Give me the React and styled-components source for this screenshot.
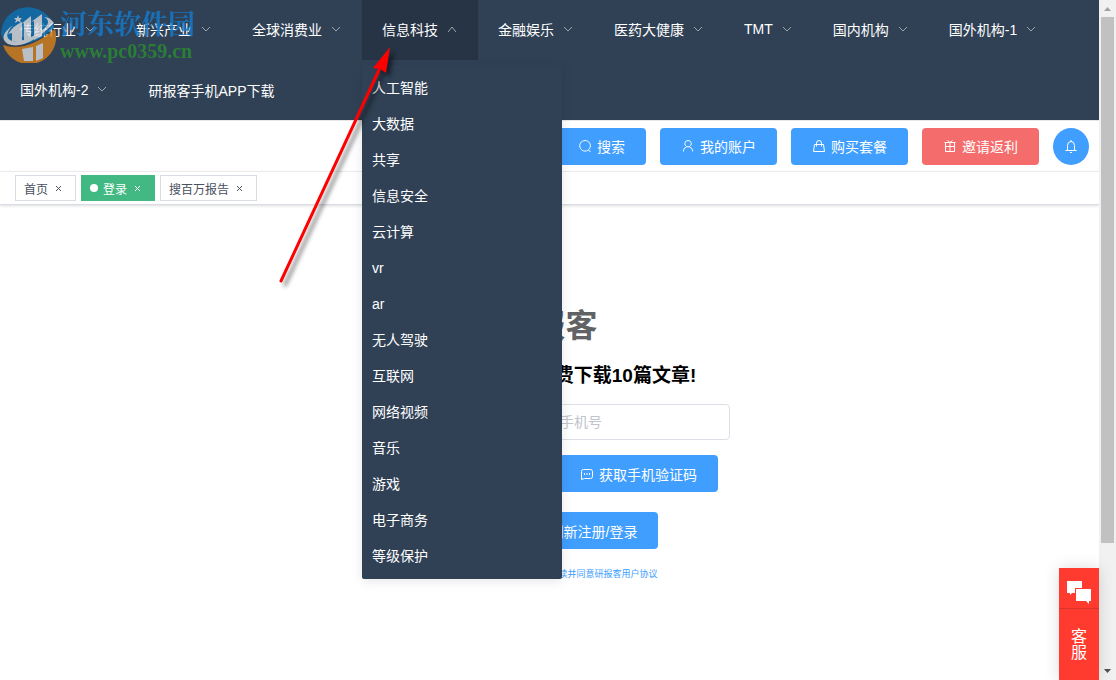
import React from 'react';
import styled, {createGlobalStyle, css} from 'styled-components';

const GlobalStyle = createGlobalStyle`
  * {
    box-sizing: border-box;
  }

  body {
    margin: 0;
    overflow: hidden;
    background: #fff;
    color: #000;
    font-family: "Liberation Sans", "Noto Sans CJK SC", sans-serif;
    font-size: 14px;
  }

  button, input {
    font: inherit;
  }
`;

const Window = styled.div`
  position: relative;
  display: flex;
  height: 100vh;
  overflow: hidden;
`;

const Page = styled.div`
  flex: 1;
  min-width: 0;
`;

const Nav = styled.ul`
  display: flex;
  flex-wrap: wrap;
  margin: 0;
  padding: 0;
  list-style: none;
  background: #304156;
  border-bottom: 1px solid #e6e6e6;
`;

const NavItem = styled.li`
  position: relative;
`;

const NavLink = styled.a`
  display: flex;
  align-items: center;
  gap: 8px;
  height: 60px;
  padding: 0 20px ${props => props.$plain ? 0 : 2}px;
  color: #fff;
  text-decoration: none;
  background: ${props => props.$open ? '#263445' : 'transparent'};
`;

const Menu = styled.ul`
  position: absolute;
  z-index: 10;
  top: 65px;
  left: 0;
  width: 200px;
  margin: 0;
  padding: 5px 0;
  list-style: none;
  background: #304156;
  border-radius: 2px;
  box-shadow: 0 2px 12px 0 rgba(0, 0, 0, .1);
`;

const MenuLink = styled.a`
  display: block;
  padding: 0 10px;
  line-height: 36px;
  color: #fff;
  text-decoration: none;
`;

const Toolbar = styled.div`
  display: flex;
  justify-content: flex-end;
  align-items: center;
  gap: 14px;
  height: 51px;
  padding: 0 10px;
  border-bottom: 1px solid #f3f3f3;
`;

const Button = styled.button`
  display: flex;
  align-items: center;
  justify-content: center;
  gap: 5px;
  height: 37px;
  padding: 0 21px;
  border: 0;
  border-radius: 4px;
  color: #fff;
  background: ${props => props.$danger ? '#f56c6c' : '#409eff'};
  white-space: nowrap;

  ${props => props.$round && css`
    width: 36px;
    padding: 0;
    border-radius: 50%;
  `}
`;

const Tags = styled.div`
  display: flex;
  align-items: center;
  gap: 5px;
  height: 33px;
  padding: 0 15px;
  border-bottom: 1px solid #d8dce5;
  box-shadow: 0 1px 3px 0 rgba(0, 0, 0, .12), 0 0 3px 0 rgba(0, 0, 0, .04);
`;

const Tag = styled.a`
  display: flex;
  align-items: center;
  height: 26px;
  padding: 0 8px;
  border: 1px solid ${props => props.$active ? '#42b983' : '#d8dce5'};
  color: ${props => props.$active ? '#fff' : '#495060'};
  background: ${props => props.$active ? '#42b983' : '#fff'};
  font-size: 12px;
  text-decoration: none;
`;

const Dot = styled.span`
  width: 8px;
  height: 8px;
  margin-right: 5px;
  border-radius: 50%;
  background: #fff;
`;

const CloseIcon = styled.svg`
  width: 16px;
  height: 16px;
  margin-left: 3px;
`;

const Login = styled.form`
  display: flex;
  flex-direction: column;
  align-items: center;
  padding-top: 97px;
`;

const Title = styled.h1`
  margin: 0;
  color: #606266;
  font-size: 32px;
  line-height: 48px;
`;

const SubTitle = styled.h3`
  margin: 16px 0 18px;
  font-size: 19px;
  line-height: 20px;
`;

const Row = styled.div`
  display: flex;
  align-items: center;
  gap: ${props => props.$gap || 14}px;
  margin-bottom: ${props => props.$space || 0}px;
`;

const Label = styled.label`
  width: 119px;
  text-align: right;
  color: #606266;
`;

const Input = styled.input`
  width: ${props => props.$short ? 164 : 228}px;
  height: 36px;
  padding: 0 15px;
  border: 1px solid #dcdfe6;
  border-radius: 4px;
  color: #606266;

  &::placeholder {
    color: #c0c4cc;
  }
`;

const Agreement = styled.a`
  margin-top: 17px;
  color: #409eff;
  font-size: 9px;
  line-height: 16px;
  text-decoration: none;
`;

const Service = styled.button`
  position: absolute;
  right: 17px;
  bottom: 0;
  display: flex;
  flex-direction: column;
  align-items: center;
  width: 40px;
  height: 112px;
  padding: 0;
  border: 0;
  color: #fff;
  background: #ff3b30;
  box-shadow: 0 0 16px rgba(0, 0, 0, .14);
`;

const ServiceIcon = styled.span`
  display: flex;
  align-items: center;
  justify-content: center;
  width: 40px;
  height: 41px;
  padding-top: 8px;
  border-bottom: 1px solid #d9342b;
`;

const ServiceText = styled.span`
  width: 16px;
  margin-top: 20px;
  font-size: 16px;
  line-height: 16px;
`;

const ScrollBar = styled.div`
  display: flex;
  flex-direction: column;
  align-items: center;
  width: 17px;
  background: #f1f1f1;
`;

const ScrollArrow = styled.svg`
  flex: none;
  width: 17px;
  height: 17px;
`;

const ScrollTrack = styled.div`
  flex: 1;
  width: 13px;
`;

const ScrollThumb = styled.div`
  height: 81.5%;
  background: #c1c1c1;
`;

const Watermark = styled.div`
  position: absolute;
  z-index: 20;
  top: 5px;
  left: 0;
  display: flex;
  gap: 4px;
  opacity: .8;
  pointer-events: none;
`;

const SiteName = styled.div`
  color: #147ccf;
  font-family: "Noto Serif CJK SC", "Noto Sans CJK SC", sans-serif;
  font-size: 27px;
  font-weight: bold;
  line-height: 36px;
`;

const SiteUrl = styled.div`
  color: #2a8e2e;
  font-family: "Liberation Serif", serif;
  font-size: 20px;
  font-weight: bold;
  line-height: 20px;
`;

const Pointer = styled.svg`
  position: absolute;
  z-index: 30;
  top: 40px;
  left: 270px;
  pointer-events: none;
`;

const PointerShape = styled.g`
  filter: drop-shadow(4px 4px 2px rgba(0, 0, 0, .5));
`;

const menus = [
   {text: '传统行业'},
   {text: '新兴产业'},
   {text: '全球消费业'},
   {
      text: '信息科技',
      items: ['人工智能', '大数据', '共享', '信息安全', '云计算', 'vr', 'ar', '无人驾驶', '互联网',
         '网络视频', '音乐', '游戏', '电子商务', '等级保护']
   },
   {text: '金融娱乐'},
   {text: '医药大健康'},
   {text: 'TMT'},
   {text: '国内机构'},
   {text: '国外机构-1'},
   {text: '国外机构-2'},
   {text: '研报客手机APP下载', plain: true}
];

const Chevron = ({up}) => (
   <svg width="12" height="12" viewBox="0 0 12 12" fill="none" stroke="#a0a4aa">
      <path d={up ? 'M2 9 L6 4 L10 9' : 'M2 4 L6 8 L10 4'} />
   </svg>
);

const iconPaths = {
   search: <path d="M10.500 11 L12.500 13 M7 1.500 a5.300 5.300 0 1 0 .1 0z" />,
   user: <path d="M7 1.500 a3.200 3.200 0 1 0 .1 0z M2.500 12.500 v-1 q0 -2.500 3 -3.500 M11.500 12.500 v-1 q0 -2.500 -3 -3.500" />,
   bag: <path d="M2.500 5.500 h9 l1 7 h-11z M4.500 7.500 v-3.500 q0 -2.500 2.500 -2.500 t2.500 2.500 v3.500" />,
   gift: <path d="M1.500 3.500 h11 M2.500 3.500 v9 h9 v-9 M2 7.500 h10 M7 3.500 v9 M4.500 1.500 l2.500 2 l2.500 -2" />,
   bell: <path d="M1.500 11.500 h11 M3.500 11.500 v-5 q0 -4 3.500 -4 t3.500 4 v5 M7 1 v1.500 M6 13.500 h2" />,
   chat: <path d="M3.500 2.500 h7 q2 0 2 2 v5 q0 2 -2 2 h-6 l-3 1 v-8 q0 -2 2 -2z M4.500 6 v2 M7 6 v2 M9.500 6 v2" />
};

const Icon = ({name}) => (
   <svg width="14" height="14" viewBox="0 0 14 14" fill="none" stroke="#fff">{iconPaths[name]}</svg>
);

const TagItem = ({text, active}) => (
   <Tag href="#" $active={active}>
      {active && <Dot />}
      {text}
      <CloseIcon viewBox="0 0 16 16" stroke="currentColor">
         <path d="M5 6 l5 5 M10 6 l-5 5" />
      </CloseIcon>
   </Tag>
);

const Logo = () => (
   <svg width="56" height="58" viewBox="0 0 56 58">
      <path d="M1 29 A27 27 0 0 1 54 22 Q40 38 18 40 Q4 40 1 29z" fill="#0c72b5" />
      <path d="M3 40 Q26 48 55 24 A27 27 0 0 1 3 40z" fill="#d9811a" />
      <g fill="#dbdfe4">
         <path d="M12 36 V28 L8 29 Q14 20 22 17 V37z" />
         <path d="M24 37 V18 L21 19 L31 11 V36z" />
         <path d="M34 35 V16 L31 17 L42 9 V31z" />
         <path d="M22 44 l11 -2 v14 h-9z M36 41 l7 -3 v15 l-7 3z" />
         <path d="M13 20 Q-3 32 8 39 Q26 46 54 18 Q50 12 44 12 Q52 16 44 24 Q26 38 12 36 Q2 32 13 20z" />
         <path d="M18 10 l1 3 h3 l-2 2 l1 3 l-3 -2 l-3 2 l1 -3 l-2 -2 h3z" />
      </g>
   </svg>
);

const App = () => {
   return <Window>
      <GlobalStyle />
      <Page>
         <Nav>
            {menus.map(menu => (
               <NavItem key={menu.text}>
                  <NavLink href="#" $open={!!menu.items} $plain={menu.plain}>
                     {menu.text}
                     {!menu.plain && <Chevron up={!!menu.items} />}
                  </NavLink>
                  {menu.items && <Menu>
                     {menu.items.map(item => <li key={item}><MenuLink href="#">{item}</MenuLink></li>)}
                  </Menu>}
               </NavItem>
            ))}
         </Nav>
         <Toolbar>
            <Button><Icon name="search" />搜索</Button>
            <Button><Icon name="user" />我的账户</Button>
            <Button><Icon name="bag" />购买套餐</Button>
            <Button $danger><Icon name="gift" />邀请返利</Button>
            <Button $round aria-label="消息"><Icon name="bell" /></Button>
         </Toolbar>
         <Tags>
            <TagItem text="首页" />
            <TagItem text="登录" active />
            <TagItem text="搜百万报告" />
         </Tags>
         <Login>
            <Title>研报客</Title>
            <SubTitle>新用户注册登录免费下载10篇文章!</SubTitle>
            <Row $space={15}>
               <Label htmlFor="phone">手机号</Label>
               <Input id="phone" placeholder="请输入手机号" />
            </Row>
            <Row $space={20}>
               <Input $short aria-label="验证码" placeholder="验证码" />
               <Button type="button"><Icon name="chat" />获取手机验证码</Button>
            </Row>
            <Row $gap={18}>
               <Button type="button">返回</Button>
               <Button type="button">刷新注册/登录</Button>
            </Row>
            <Agreement href="#">点击注册登录即代表您已经阅读并同意研报客用户协议</Agreement>
         </Login>
      </Page>
      <ScrollBar>
         <ScrollArrow viewBox="0 0 17 17" fill="#a3a3a3"><path d="M5 11 L8.500 7 L12 11z" /></ScrollArrow>
         <ScrollTrack><ScrollThumb /></ScrollTrack>
         <ScrollArrow viewBox="0 0 17 17" fill="#505050"><path d="M5 6 L8.500 10 L12 6z" /></ScrollArrow>
      </ScrollBar>
      <Service>
         <ServiceIcon>
            <svg width="26" height="24" viewBox="0 0 26 24" fill="#fff">
               <path d="M1 1 h15 v7 h-7 v5 h-3 l-2 2 v-2 h-3z" />
               <path d="M10 9 h15 v12 h-2 v3 l-3 -3 h-10z" />
            </svg>
         </ServiceIcon>
         <ServiceText>客服</ServiceText>
      </Service>
      <Watermark>
         <Logo />
         <div>
            <SiteName>河东软件园</SiteName>
            <SiteUrl>www.pc0359.cn</SiteUrl>
         </div>
      </Watermark>
      <Pointer width="140" height="250" viewBox="0 0 140 250">
         <PointerShape>
            <path d="M11 241 L109 30" stroke="#f00" strokeWidth="3" strokeLinecap="round" />
            <path d="M120 7 L116 33 L110 29 L103 28z" fill="#f00" />
         </PointerShape>
      </Pointer>
   </Window>;
};

export default App;
